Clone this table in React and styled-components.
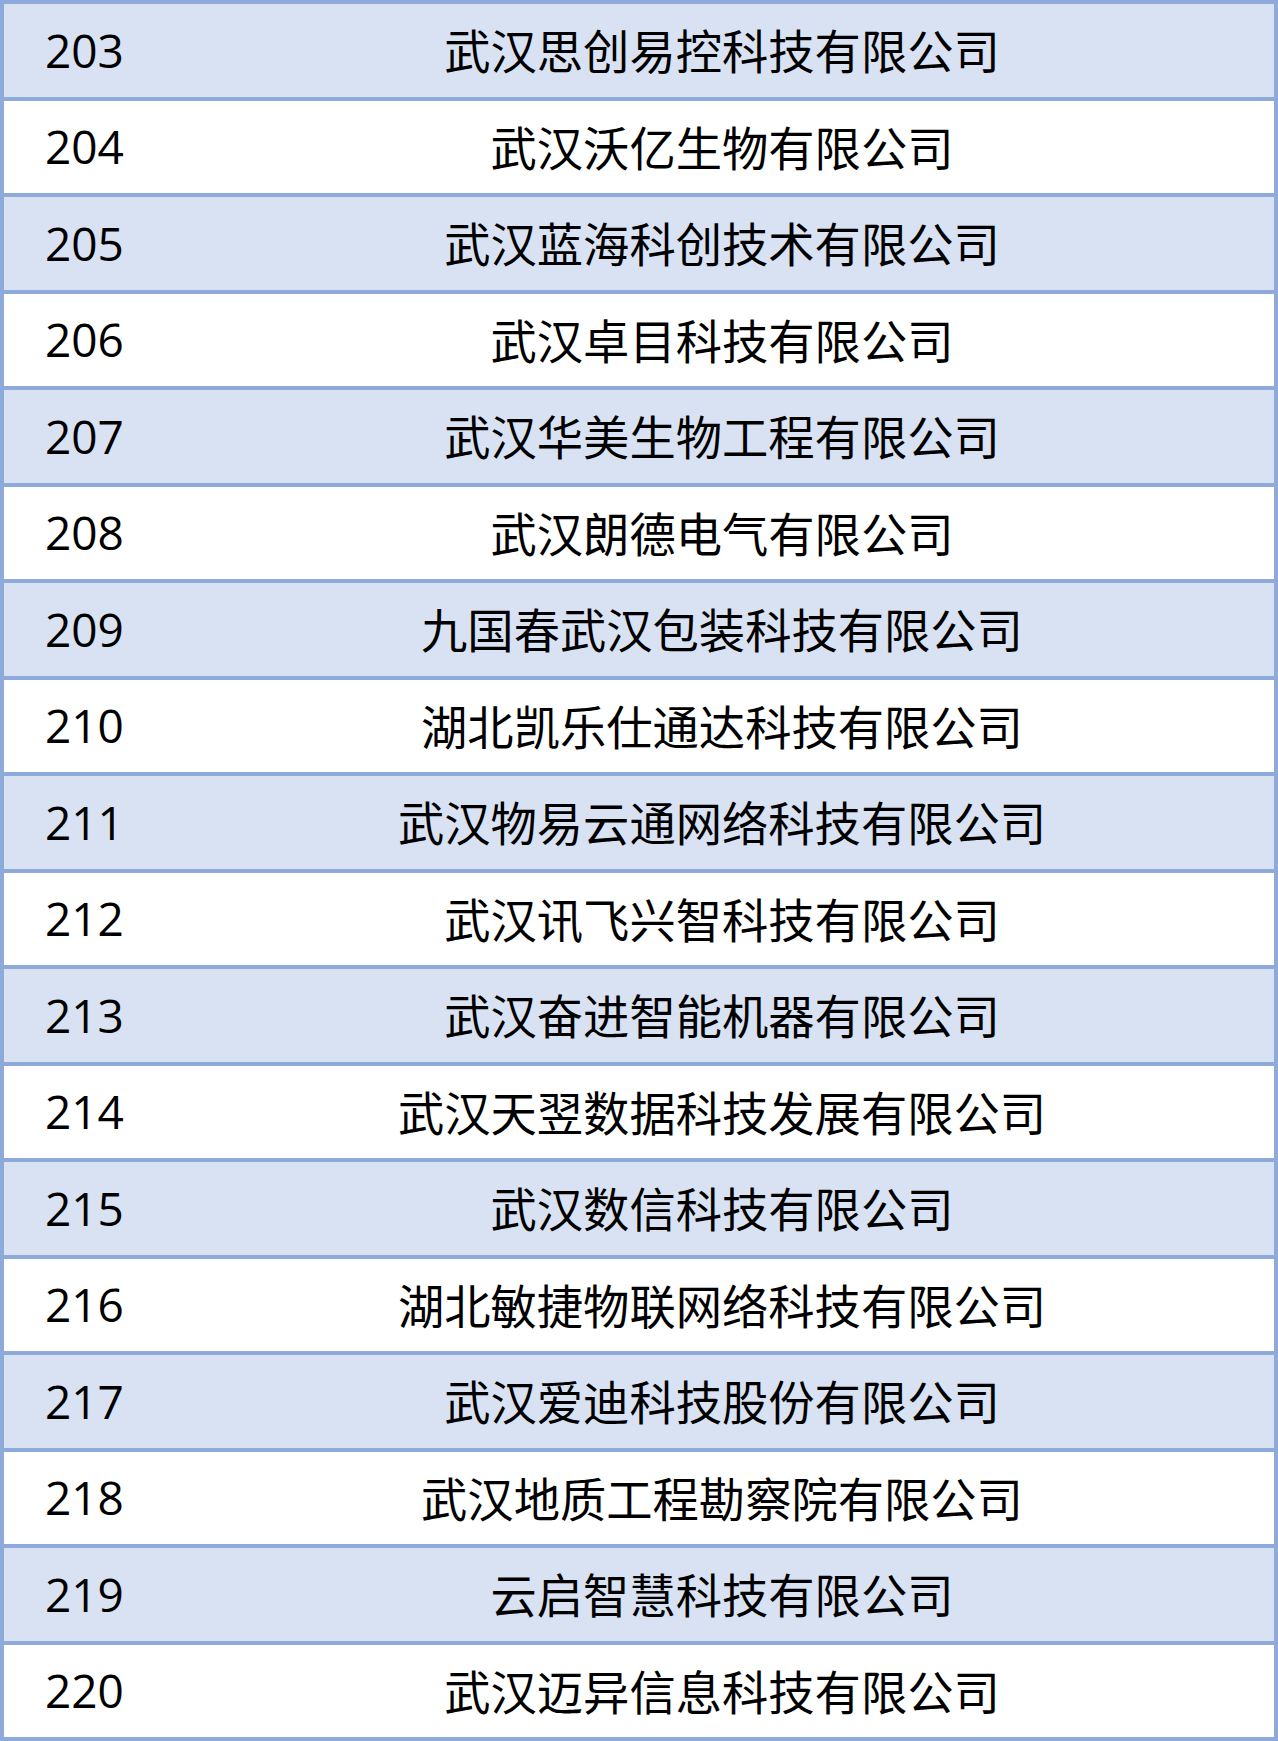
import React from "react"
import styled, { createGlobalStyle } from "styled-components"

const companies = [
  [203, "武汉思创易控科技有限公司"],
  [204, "武汉沃亿生物有限公司"],
  [205, "武汉蓝海科创技术有限公司"],
  [206, "武汉卓目科技有限公司"],
  [207, "武汉华美生物工程有限公司"],
  [208, "武汉朗德电气有限公司"],
  [209, "九国春武汉包装科技有限公司"],
  [210, "湖北凯乐仕通达科技有限公司"],
  [211, "武汉物易云通网络科技有限公司"],
  [212, "武汉讯飞兴智科技有限公司"],
  [213, "武汉奋进智能机器有限公司"],
  [214, "武汉天翌数据科技发展有限公司"],
  [215, "武汉数信科技有限公司"],
  [216, "湖北敏捷物联网络科技有限公司"],
  [217, "武汉爱迪科技股份有限公司"],
  [218, "武汉地质工程勘察院有限公司"],
  [219, "云启智慧科技有限公司"],
  [220, "武汉迈异信息科技有限公司"],
]

const GlobalStyle = createGlobalStyle`
  html, body {
    margin: 0;
    padding: 0;
    background: #ffffff;
  }
  body {
    font-family: "Open Sans", "Noto Sans CJK SC", sans-serif;
  }
`

const Table = styled.div`
  width: 1278px;
  box-sizing: border-box;
  border: 4px solid #8eaadb;
  display: flex;
  flex-direction: column;
`

const Row = styled.div`
  display: grid;
  grid-template-columns: 166px 1fr;
  align-items: center;
  height: 92.5px;
  background: ${(p) => (p.$shaded ? "#d9e2f3" : "#ffffff")};
  & + & {
    border-top: 4px solid #8eaadb;
  }
`

const Num = styled.div`
  padding-left: 41px;
  padding-bottom: 1px;
  font-size: 46px;
  color: #000;
  line-height: 1;
`

const Name = styled.div`
  text-align: center;
  padding-bottom: 2px;
  font-family: "Noto Sans CJK SC", sans-serif;
  font-size: 46.3px;
  color: #000;
  line-height: 1;
`

const App = () => (
  <>
    <GlobalStyle />
    <Table>
      {companies.map(([n, name], i) => (
        <Row key={n} $shaded={i % 2 === 0}>
          <Num>{n}</Num>
          <Name>{name}</Name>
        </Row>
      ))}
    </Table>
  </>
)

export default App
